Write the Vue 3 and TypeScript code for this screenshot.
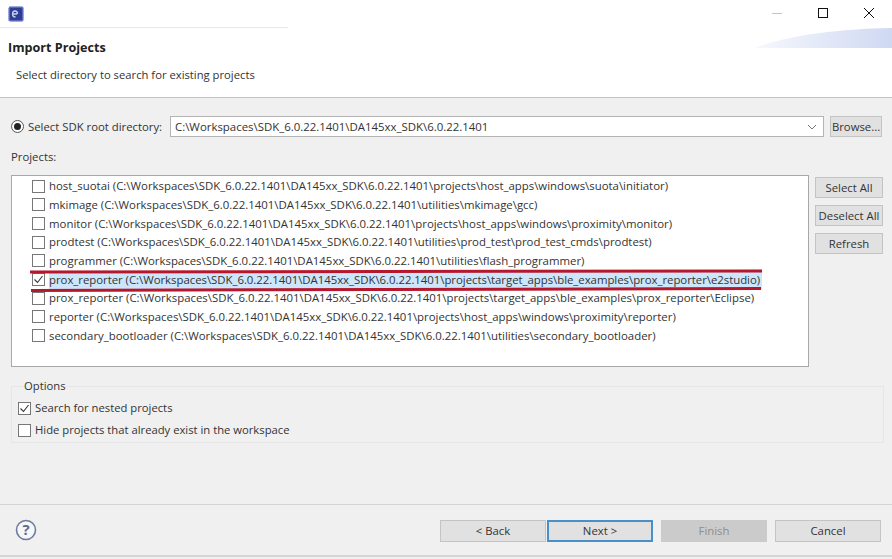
<script setup lang="ts">
const root = "C:\\Workspaces\\SDK_6.0.22.1401\\DA145xx_SDK\\6.0.22.1401\\";

const projects = [
  { name: "host_suotai", path: "projects\\host_apps\\windows\\suota\\initiator" },
  { name: "mkimage", path: "utilities\\mkimage\\gcc" },
  { name: "monitor", path: "projects\\host_apps\\windows\\proximity\\monitor" },
  { name: "prodtest", path: "utilities\\prod_test\\prod_test_cmds\\prodtest" },
  { name: "programmer", path: "utilities\\flash_programmer" },
  { name: "prox_reporter", path: "projects\\target_apps\\ble_examples\\prox_reporter\\e2studio", checked: true },
  { name: "prox_reporter", path: "projects\\target_apps\\ble_examples\\prox_reporter\\Eclipse" },
  { name: "reporter", path: "projects\\host_apps\\windows\\proximity\\reporter" },
  { name: "secondary_bootloader", path: "utilities\\secondary_bootloader" },
];
</script>

<template>
  <div class="dialog">
    <header class="titlebar">
      <svg class="app-icon" width="16" height="16" viewBox="0 0 16 16">
        <rect x="0.5" y="0.5" width="15" height="15" rx="2" fill="#5a68bd" stroke="#9aa4dc" stroke-dasharray="1 1" />
        <rect x="2" y="2" width="12" height="12" rx="1" fill="#2f3d94" />
        <path d="M4.5 8h4.5M4.5 8c0-2 1-3 2.5-3s2.5 1 2.5 3M4.5 8c0 2 1 3 3 3" fill="none" stroke="#c6d2f0" stroke-width="1.3" />
      </svg>
      <div class="controls">
        <svg width="12" height="12" viewBox="0 0 12 12"><path d="M1 6.5h10" stroke="#c4c4c4" /></svg>
        <svg width="12" height="12" viewBox="0 0 12 12"><rect x="1.5" y="1.5" width="9" height="9" fill="none" stroke="#111" /></svg>
        <svg width="12" height="12" viewBox="0 0 12 12"><path d="M1 1l10 10M11 1L1 11" stroke="#111" /></svg>
      </div>
    </header>

    <section class="banner">
      <svg class="swoosh" width="137" height="20" viewBox="0 0 137 20">
        <defs>
          <linearGradient id="swoosh-fill" x1="0" x2="1" y1="0" y2="0">
            <stop offset="0" stop-color="#f6f8fd" />
            <stop offset="1" stop-color="#cfd9f2" />
          </linearGradient>
        </defs>
        <path d="M0 20C30 8 80 1 137 0V20Z" fill="url(#swoosh-fill)" />
      </svg>
      <h1>Import Projects</h1>
      <p>Select directory to search for existing projects</p>
    </section>

    <main class="body">
      <div class="root-row">
        <span class="radio"><i></i></span>
        <label>Select SDK root directory:</label>
        <div class="combo">
          <span>C:\Workspaces\SDK_6.0.22.1401\DA145xx_SDK\6.0.22.1401</span>
          <svg width="10" height="6" viewBox="0 0 10 6"><path d="M1 1l4 4 4-4" fill="none" stroke="#777" /></svg>
        </div>
        <button class="btn browse">Browse...</button>
      </div>

      <div class="projects-label">Projects:</div>
      <div class="projects">
        <ul class="list">
          <li v-for="(p, i) in projects" :key="i" :class="{ marked: p.checked }">
            <span class="check" :class="{ on: p.checked }">
              <svg v-if="p.checked" width="11" height="11" viewBox="0 0 11 11"><path d="M1.5 5.5l3 3 5-6.5" fill="none" stroke="#333" stroke-width="1.1" /></svg>
            </span>
            <span class="row-text">{{ p.name }} ({{ root }}{{ p.path }})</span>
          </li>
        </ul>
        <div class="side">
          <button class="btn">Select All</button>
          <button class="btn">Deselect All</button>
          <button class="btn">Refresh</button>
        </div>
      </div>

      <fieldset class="options">
        <legend>Options</legend>
        <div class="opt">
          <span class="check on">
            <svg width="11" height="11" viewBox="0 0 11 11"><path d="M1.5 5.5l3 3 5-6.5" fill="none" stroke="#333" stroke-width="1.1" /></svg>
          </span>
          Search for nested projects
        </div>
        <div class="opt">
          <span class="check"></span>
          Hide projects that already exist in the workspace
        </div>
      </fieldset>
    </main>

    <footer class="footer">
      <svg class="help" width="22" height="22" viewBox="0 0 22 22">
        <circle cx="11" cy="11" r="9.5" fill="#f6f7fa" stroke="#6d7c9c" stroke-width="1.6" />
        <text x="11" y="16" text-anchor="middle" class="help-mark">?</text>
      </svg>
      <div class="nav">
        <div class="pair">
          <button class="btn wide">&lt; Back</button>
          <button class="btn wide default">Next &gt;</button>
        </div>
        <button class="btn wide disabled">Finish</button>
        <button class="btn wide">Cancel</button>
      </div>
    </footer>
  </div>
</template>

<style scoped>
.dialog {
  width: 892px;
  height: 559px;
  display: flex;
  flex-direction: column;
  overflow: hidden;
  background: #f0f0f0;
  color: #333;
  font: 11.33px/16px "Open Sans", "Noto Sans", sans-serif;
}
.titlebar {
  height: 28px;
  flex: none;
  display: flex;
  align-items: center;
  justify-content: space-between;
  background: #fff;
  padding: 0 17px 0 8px;
  box-sizing: border-box;
  position: relative;
}
.titlebar::after {
  content: "";
  position: absolute;
  left: 0;
  bottom: 0;
  width: 288px;
  height: 1px;
  background: #e8e8e8;
}
.controls {
  display: flex;
  gap: 34px;
  margin-top: -2px;
}
.banner {
  height: 70px;
  flex: none;
  position: relative;
  box-sizing: border-box;
  background: #fff;
  border-bottom: 1px solid #c4c4c4;
  padding: 12px 0 0 8px;
}
.swoosh {
  position: absolute;
  top: 0;
  right: 0;
}
.banner h1 {
  margin: 0;
  font-size: 12.6px;
  line-height: 16px;
  font-weight: 700;
  color: #222;
}
.banner p {
  margin: 11px 0 0 8px;
  font-size: 11.25px;
  line-height: 16px;
}
.body {
  flex: 1;
  padding: 18px 8px 0 11px;
  display: flex;
  flex-direction: column;
}
.root-row {
  display: flex;
  align-items: center;
  height: 21px;
}
.radio {
  width: 13px;
  height: 13px;
  box-sizing: border-box;
  border: 1px solid #555;
  border-radius: 50%;
  background: #fff;
  display: flex;
  align-items: center;
  justify-content: center;
  margin-right: 4px;
}
.radio i {
  width: 7px;
  height: 7px;
  border-radius: 50%;
  background: #222;
}
.root-row label {
  width: 142px;
  flex: none;
}
.combo {
  width: 654px;
  height: 21px;
  box-sizing: border-box;
  flex: none;
  display: flex;
  align-items: center;
  justify-content: space-between;
  padding: 0 6px 0 4px;
  font-size: 11.42px;
  background: #fff;
  border: 1px solid #b4b4b4;
}
.btn {
  font: inherit;
  color: #333;
  height: 21px;
  padding: 0;
  background: #e1e1e1;
  border: 1px solid #c4c4c4;
  box-sizing: border-box;
}
.browse {
  width: 52px;
  margin-left: 6px;
  flex: none;
}
.projects-label {
  margin-top: 12px;
  line-height: 16px;
}
.projects {
  display: flex;
  margin-top: 10px;
}
.list {
  width: 798px;
  height: 192px;
  box-sizing: border-box;
  flex: none;
  list-style: none;
  margin: 0;
  padding: 1px 0 0 20px;
  font-size: 11.4px;
  background: #fff;
  border: 1px solid #a8a8a8;
}
.list li {
  height: 18.67px;
  display: flex;
  align-items: center;
  position: relative;
  white-space: nowrap;
}
.check {
  width: 13px;
  height: 13px;
  box-sizing: border-box;
  flex: none;
  border: 1px solid #777;
  background: #fff;
  display: inline-flex;
  align-items: center;
  justify-content: center;
}
.row-text {
  margin-left: 4px;
  padding-right: 2px;
}
.marked .row-text {
  line-height: 18px;
  letter-spacing: -0.03px;
  background: #cde6fb;
}
.marked::before,
.marked::after {
  content: "";
  position: absolute;
  left: -2px;
  width: 732px;
  height: 3px;
  background: #b5172c;
  z-index: 1;
}
.marked::before {
  top: 0;
  transform: rotate(-0.08deg);
}
.marked::after {
  bottom: -2px;
  left: -1px;
  width: 730px;
  transform: rotate(-0.15deg);
}
.side {
  display: flex;
  flex-direction: column;
  gap: 7px;
  margin: 2px 0 0 6px;
}
.side .btn {
  width: 68px;
}
.options {
  margin: 11px 0 0;
  padding: 3px 0 0 7px;
  width: 873px;
  height: 65px;
  box-sizing: border-box;
  font-size: 11.25px;
  border: 1px solid #e6e6e6;
  min-inline-size: 0;
}
.options legend {
  padding: 0;
  margin-left: 5px;
  line-height: 16px;
}
.opt {
  height: 22px;
  display: flex;
  align-items: center;
  gap: 3px;
}
.opt .check {
  margin-right: 1px;
  margin-left: -1px;
}
.footer {
  height: 53px;
  flex: none;
  box-sizing: border-box;
  margin-bottom: 2px;
  border-top: 1px solid #d4d4d4;
  border-bottom: 2px solid #d6d6d6;
  display: flex;
  align-items: center;
  justify-content: space-between;
  padding: 0 11px 0 15px;
}
.help-mark {
  font: 700 15px "Open Sans", sans-serif;
  fill: #5d6d90;
}
.nav {
  display: flex;
  gap: 8px;
  margin-top: 2px;
}
.pair {
  display: flex;
  gap: 1px;
}
.wide {
  width: 106px;
  height: 22px;
}
.default {
  border: 2px solid #4a90c8;
}
.disabled {
  background: #cbcbcb;
  border-color: #cbcbcb;
  color: #8e8e8e;
}
</style>

<style>
html,
body {
  margin: 0;
  background: #f0f0f0;
}
</style>
